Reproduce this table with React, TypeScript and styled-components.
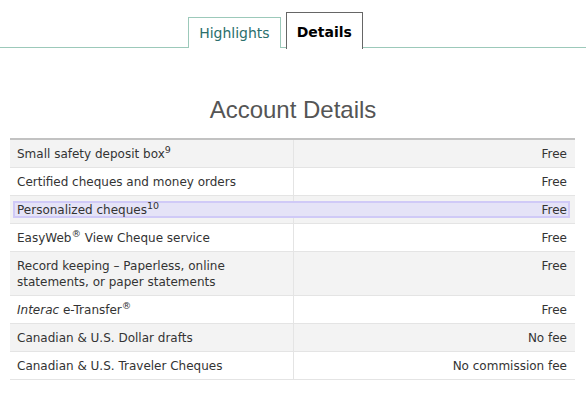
import React from "react"
import styled, { createGlobalStyle, css } from "styled-components"

const GlobalStyle = createGlobalStyle`
  body {
    margin: 0;
    background: #ffffff;
    font-family: "DejaVu Sans", Verdana, sans-serif;
  }
`

const Page = styled.div`
  width: 586px;
  min-height: 393px;
  background: #ffffff;
`

const TabBar = styled.div`
  display: flex;
  align-items: flex-end;
  justify-content: center;
  gap: 5px;
  height: 48px;
  padding-right: 35px;
  border-bottom: 1px solid #9cc9ba;
  box-sizing: border-box;
`

const Tab = styled.div<{ $active?: boolean }>`
  font-size: 14px;
  line-height: 16px;
  padding: 7px 10px 7px 10px;
  border: 1px solid #9cc9ba;
  border-bottom: none;
  color: #2b6f6c;
  background: #ffffff;
  margin-bottom: -1px;

  ${props => props.$active && css`
    font-weight: bold;
    color: #000000;
    border-color: #666666;
    padding: 11px 10px 9px 10px;
    margin-bottom: -2px;
  `}
`

const Title = styled.h2`
  margin: 48px 0 14px 0;
  text-align: center;
  font-family: "Liberation Sans", Arial, sans-serif;
  font-weight: normal;
  font-size: 24px;
  line-height: 28px;
  color: #555555;
`

const Table = styled.div`
  margin: 0 11px 0 10px;
  border-top: 2px solid #c2c2c2;
  font-size: 12px;
  line-height: 16px;
  color: #333333;
`

const Row = styled.div<{ $shaded?: boolean; $marked?: boolean }>`
  display: grid;
  grid-template-columns: 1fr 1fr;
  position: relative;
  border-bottom: 1px solid #e4e4e4;
  background: ${props => (props.$shaded ? "#f3f3f3" : "#ffffff")};

  /* selection band behind the row text */
  ${props => props.$marked && css`
    &::before {
      content: "";
      position: absolute;
      left: 3px;
      right: 5px;
      top: 5px;
      bottom: 5px;
      z-index: 2;
      background: #e5e3f7;
      border: 2px solid #d0caf7;
    }
  `}
`

const Cell = styled.div<{ $right?: boolean }>`
  padding: 6px 8px 5px 7px;
  ${props => props.$right
    ? css`
      text-align: right;
      border-left: 1px solid #e4e4e4;
    `
    : css`
      padding-right: 20px;
    `}
`

const CellText = styled.span`
  position: relative;
  z-index: 3;
`

const Sup = styled.sup`
  font-size: 9.5px;
  line-height: 0;
  vertical-align: 5px;
`

const rows: { label: React.ReactNode; fee: string; marked?: boolean }[] = [
  { label: <>Small safety deposit box<Sup>9</Sup></>, fee: "Free" },
  { label: "Certified cheques and money orders", fee: "Free" },
  { label: <>Personalized cheques<Sup>10</Sup></>, fee: "Free", marked: true },
  { label: <>EasyWeb<Sup>®</Sup> View Cheque service</>, fee: "Free" },
  { label: "Record keeping – Paperless, online statements, or paper statements", fee: "Free" },
  { label: <><i>Interac</i> e-Transfer<Sup>®</Sup></>, fee: "Free" },
  { label: "Canadian & U.S. Dollar drafts", fee: "No fee" },
  { label: "Canadian & U.S. Traveler Cheques", fee: "No commission fee" }
]

export default function App(){
  return (
    <Page>
      <GlobalStyle/>

      <TabBar>
        <Tab>Highlights</Tab>
        <Tab $active>Details</Tab>
      </TabBar>

      <Title>Account Details</Title>

      <Table>
        {rows.map((row, i) => (
          <Row key={i} $shaded={i % 2 === 0} $marked={row.marked}>
            <Cell><CellText>{row.label}</CellText></Cell>
            <Cell $right><CellText>{row.fee}</CellText></Cell>
          </Row>
        ))}
      </Table>
    </Page>
  )
}
